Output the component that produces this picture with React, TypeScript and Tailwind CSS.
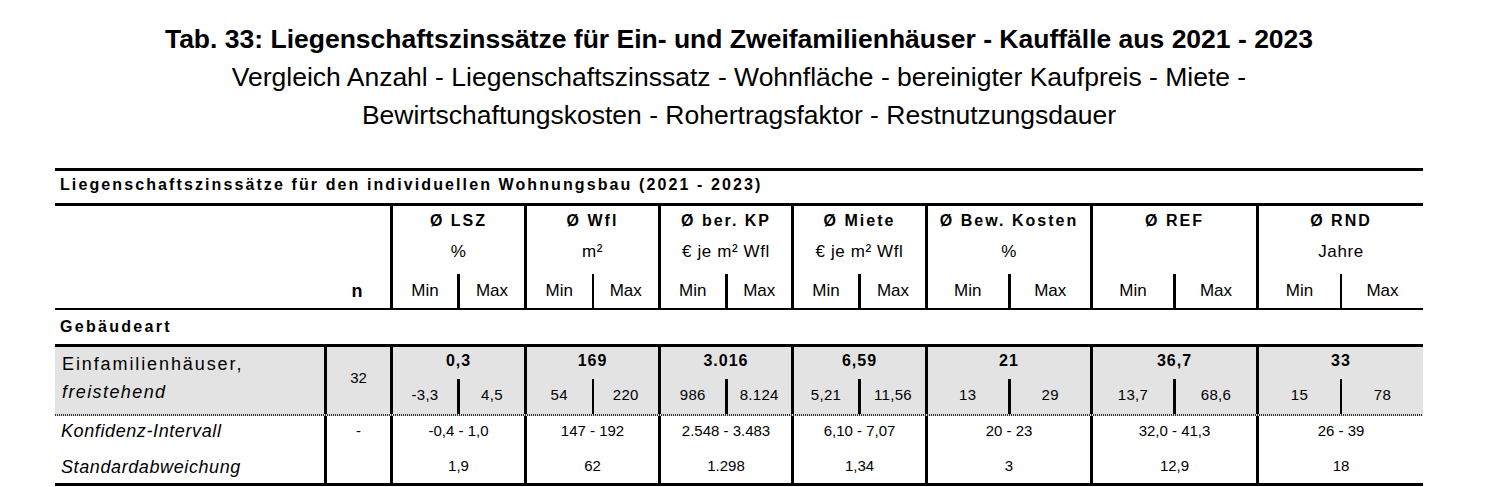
import React from "react";

type Col = {
  title: string;
  unit: string;
  w: string;
  div: string;
  main: string;
  min: string;
  max: string;
  ki: string;
  sd: string;
};

const cols: Col[] = [
  { title: "Ø LSZ", unit: "%", w: "w-[134px]", div: "w-[3px]", main: "0,3", min: "-3,3", max: "4,5", ki: "-0,4 - 1,0", sd: "1,9" },
  { title: "Ø Wfl", unit: "m²", w: "w-[134px]", div: "w-[2px]", main: "169", min: "54", max: "220", ki: "147 - 192", sd: "62" },
  { title: "Ø ber. KP", unit: "€ je m² Wfl", w: "w-[133px]", div: "w-[3px]", main: "3.016", min: "986", max: "8.124", ki: "2.548 - 3.483", sd: "1.298" },
  { title: "Ø Miete", unit: "€ je m² Wfl", w: "w-[134px]", div: "w-[3px]", main: "6,59", min: "5,21", max: "11,56", ki: "6,10 - 7,07", sd: "1,34" },
  { title: "Ø Bew. Kosten", unit: "%", w: "w-[165px]", div: "w-[3px]", main: "21", min: "13", max: "29", ki: "20 - 23", sd: "3" },
  { title: "Ø REF", unit: "", w: "w-[166px]", div: "w-[3px]", main: "36,7", min: "13,7", max: "68,6", ki: "32,0 - 41,3", sd: "12,9" },
  { title: "Ø RND", unit: "Jahre", w: "w-[167px]", div: "w-[2px]", main: "33", min: "15", max: "78", ki: "26 - 39", sd: "18" },
];

export default function App() {
  return (
    <div className="w-[1486px] h-[487px] overflow-hidden bg-white text-black font-['Liberation_Sans',Arial,sans-serif]">
      <div className="ml-[55px] w-[1368px]">
        {/* Title block */}
        <div className="pt-[20px] text-center text-[26.5px] leading-[38px]">
          <div className="font-bold">
            Tab. 33: Liegenschaftszinssätze für Ein- und Zweifamilienhäuser - Kauffälle aus 2021 - 2023
          </div>
          <div>Vergleich Anzahl - Liegenschaftszinssatz - Wohnfläche - bereinigter Kaufpreis - Miete -</div>
          <div>Bewirtschaftungskosten - Rohertragsfaktor - Restnutzungsdauer</div>
        </div>

        <div className="mt-[34px] h-[3px] bg-black" />
        <div className="h-[32px] flex items-center pl-[5px] pb-[4px] font-bold text-[16px] tracking-[2.1px] whitespace-nowrap">
          Liegenschaftszinssätze für den individuellen Wohnungsbau (2021 - 2023)
        </div>
        <div className="h-[3px] bg-black" />

        {/* Header */}
        <div className="flex h-[102px]">
          <div className="w-[269px]" />
          <div className="w-[66px] flex flex-col justify-end">
            <div className="h-[34px] flex items-center justify-center font-bold text-[18px]">n</div>
          </div>
          {cols.map((c) => (
            <div key={c.title} className={`${c.w} border-l-[3px] border-black flex flex-col`}>
              <div className="h-[30px] flex items-center justify-center font-bold text-[16px] tracking-[2px] whitespace-nowrap">
                {c.title}
              </div>
              <div className="h-[32px] flex items-center justify-center text-[17px] tracking-[0.6px] whitespace-nowrap">
                {c.unit}
              </div>
              <div className="mt-[6px] h-[34px] flex text-[17px]">
                <div className="flex-1 flex items-center justify-center">Min</div>
                <div className={`${c.div} bg-black`} />
                <div className="flex-1 flex items-center justify-center">Max</div>
              </div>
            </div>
          ))}
        </div>
        <div className="h-[2px] bg-black" />

        {/* Gebäudeart */}
        <div className="h-[34px] flex items-center pl-[5px] pb-[1px] font-bold text-[16px] tracking-[2.3px]">
          Gebäudeart
        </div>
        <div className="h-[3px] bg-black" />

        {/* Gray data row */}
        <div className="flex h-[67px] bg-[#e3e3e3]">
          <div className="w-[269px] pl-[7px] pt-[7px] text-[18px] whitespace-nowrap">
            <div className="leading-[20px] tracking-[1.9px]">Einfamilienhäuser,</div>
            <div className="mt-[8px] leading-[20px] italic tracking-[1.4px]">freistehend</div>
          </div>
          <div className="w-[66px] border-l-[3px] border-black flex items-center justify-center pb-[5px] text-[15px]">
            32
          </div>
          {cols.map((c) => (
            <div key={c.title} className={`${c.w} border-l-[3px] border-black flex flex-col`}>
              <div className="h-[27px] flex items-center justify-center font-bold text-[16px] tracking-[1px]">
                {c.main}
              </div>
              <div className="mt-[5px] h-[35px] flex text-[15px] tracking-[0.3px]">
                <div className="flex-1 flex items-center justify-center pb-[3px]">{c.min}</div>
                <div className={`${c.div} bg-black`} />
                <div className="flex-1 flex items-center justify-center pb-[3px]">{c.max}</div>
              </div>
            </div>
          ))}
        </div>
        <div className="h-[2px] bg-[repeating-linear-gradient(90deg,#333_0px,#333_1px,#d8d8d8_1px,#d8d8d8_2px)]" />

        {/* Konfidenz-Intervall */}
        <div className="flex h-[32px]">
          <div className="w-[269px] pl-[6px] pb-[2px] flex items-center italic text-[18px] tracking-[0.6px] whitespace-nowrap">
            Konfidenz-Intervall
          </div>
          <div className="w-[66px] border-l-[3px] border-black flex items-center justify-center pb-[2px] text-[15px]">
            -
          </div>
          {cols.map((c) => (
            <div
              key={c.title}
              className={`${c.w} border-l-[3px] border-black flex items-center justify-center pb-[2px] text-[15px] whitespace-nowrap`}
            >
              {c.ki}
            </div>
          ))}
        </div>

        {/* Standardabweichung */}
        <div className="flex h-[35px]">
          <div className="w-[269px] pl-[6px] pt-[3px] flex items-center italic text-[18px] tracking-[0.6px] whitespace-nowrap">
            Standardabweichung
          </div>
          <div className="w-[66px] border-l-[3px] border-black" />
          {cols.map((c) => (
            <div
              key={c.title}
              className={`${c.w} border-l-[3px] border-black flex items-center justify-center pt-[2px] text-[15px]`}
            >
              {c.sd}
            </div>
          ))}
        </div>
        <div className="h-[3px] bg-black" />
      </div>
    </div>
  );
}
